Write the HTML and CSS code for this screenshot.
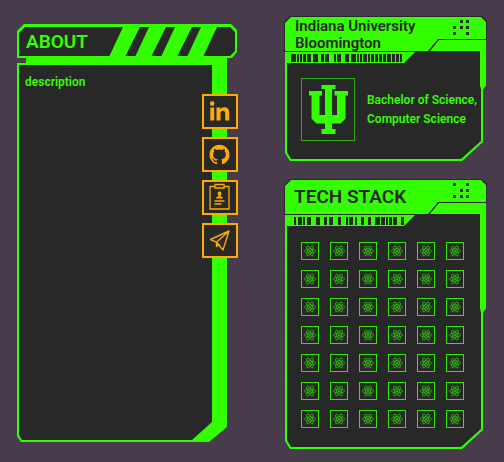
FILE: index.html
```html
<!DOCTYPE html>
<html lang="en">
<head>
<meta charset="utf-8">
<meta name="viewport" content="width=device-width, initial-scale=1">
<title>About</title>
<link rel="stylesheet" href="styles.css">
</head>
<body>
<svg class="sprite" aria-hidden="true">
  <symbol id="react" viewBox="0 0 24 24">
    <g fill="none" stroke="currentColor" stroke-width="1.5">
      <ellipse cx="12" cy="12" rx="11" ry="4.3"/>
      <ellipse cx="12" cy="12" rx="11" ry="4.3" transform="rotate(60 12 12)"/>
      <ellipse cx="12" cy="12" rx="11" ry="4.3" transform="rotate(120 12 12)"/>
    </g>
    <circle cx="12" cy="12" r="2.2" fill="currentColor"/>
  </symbol>
</svg>
<main class="page">
  <section class="about">
    <header class="about-head">
      <h1 class="title">ABOUT</h1>
      <svg class="stripes" viewBox="0 0 108 30" aria-hidden="true">
        <path d="M14 0h17L16 30H0zM40 0h17L42 30H26zM66 0h17L68 30H52zM92 0h16L94 30H78z"/>
      </svg>
    </header>
    <div class="about-body">
      <p class="description">description</p>
      <nav class="social" aria-label="Social links">
        <a class="social-link" href="#linkedin" aria-label="LinkedIn">
          <svg viewBox="0 0 35 35"><path fill="currentColor" d="M8.300 13.500h3.900v13H8.300zM10.200 7.300a2.300 2.300 0 1 1 0 4.600 2.300 2.300 0 0 1 0-4.600zM14.500 13.500h3.800v1.800c.700-1.200 2.100-2.100 4-2.100 3.900 0 4.900 2.400 4.900 6v7.300h-4v-6.600c0-1.700-.200-3.200-2.200-3.200-2 0-2.500 1.500-2.500 3.200v6.600h-4z"/></svg>
        </a>
        <a class="social-link" href="#github" aria-label="GitHub">
          <svg viewBox="0 0 35 35"><path transform="translate(7.500 7.500) scale(.83)" fill="currentColor" d="M12 .3a12 12 0 0 0-3.800 23.400c.6.100.8-.3.800-.6v-2c-3.300.7-4-1.600-4-1.600-.6-1.400-1.400-1.800-1.400-1.800-1-.7.100-.7.100-.7 1.200 0 1.900 1.200 1.900 1.200 1 1.800 2.800 1.300 3.500 1 0-.8.400-1.300.7-1.600-2.700-.3-5.500-1.300-5.500-6 0-1.200.5-2.300 1.300-3.100-.2-.4-.6-1.600 0-3.200 0 0 1-.3 3.400 1.200a11.500 11.500 0 0 1 6 0c2.300-1.500 3.300-1.200 3.300-1.200.6 1.600.2 2.800 0 3.200.9.800 1.300 1.900 1.300 3.200 0 4.600-2.800 5.600-5.500 5.900.5.400.9 1 .9 2.200v3.300c0 .3.100.7.800.6A12 12 0 0 0 12 .3"/></svg>
        </a>
        <a class="social-link" href="#resume" aria-label="Resume">
          <svg viewBox="0 0 35 35"><g fill="none" stroke="currentColor" stroke-width="1.300"><path d="M13 6.500H8v22.500h19V6.500h-5M13 4.500h9v3.500h-9zM12.500 21h10M12.500 24h7"/></g><path fill="currentColor" d="M17.500 11.500a1.900 1.900 0 0 1 1.200 3.400v1.600l2 .6v1.400h-6.400v-1.400l2-.6v-1.600a1.900 1.900 0 0 1 1.200-3.400z"/></svg>
        </a>
        <a class="social-link" href="#contact" aria-label="Contact">
          <svg viewBox="0 0 35 35"><path fill="none" stroke="currentColor" stroke-width="1.400" stroke-linejoin="round" d="M27 8 8.500 16.500l6 2.800L21 27zM27 8 14.500 19.300v4.200l3.200-2.200"/></svg>
        </a>
      </nav>
    </div>
  </section>
  <div class="cards">
    <section class="card">
      <header class="card-head">
        <h2 class="subtitle">Indiana University Bloomington</h2>
        <svg class="dots" viewBox="0 0 16 15" aria-hidden="true"><path d="M7 0h3v3H7zM13 0h3v3h-3zM0 6h3v3H0zM7 6h3v3H7zM13 6h3v3h-3zM0 12h3v3H0zM13 12h3v3h-3z"/></svg>
      </header>
      <div class="strip">
        <svg class="barcode" viewBox="0 0 113 8" aria-hidden="true"><path d="M0 0h5v8H0zM6 0h2v8H6zM9 0h2v8H9zM12 0h3v8h-3zM16 0h4v8h-4zM22 0h5v8h-5zM30 0h3v8h-3zM34 0h4v8h-4zM43 0h2v8h-2zM46 0h4v8h-4zM54 0h4v8h-4zM60 0h5v8h-5zM66 0h2v8h-2zM69 0h2v8h-2zM72 0h4v8h-4zM77 0h2v8h-2zM80 0h3v8h-3zM84 0h3v8h-3zM88 0h3v8h-3zM92 0h3v8h-3zM96 0h4v8h-4zM101 0h3v8h-3zM105 0h3v8h-3zM109 0h2v8h-2z"/></svg>
      </div>
      <div class="degree">
        <div class="crest">
          <svg viewBox="0 0 54 63" role="img" aria-label="Indiana University"><path d="M20.500 7h14v4H31v26h5V17.500h-2.500V13H47v4.500h-2.500v23l-5 5H31V51h3.500v5h-14v-5H24v-5.500h-8.500l-5-5v-23H8V13h13v4.500h-2.500V37H24V11h-3.500z"/></svg>
        </div>
        <p class="degree-text">Bachelor of Science,<br>Computer Science</p>
      </div>
    </section>
    <section class="card card-tech">
      <header class="card-head">
        <h2 class="title">TECH STACK</h2>
        <svg class="dots" viewBox="0 0 16 15" aria-hidden="true"><path d="M0 0h3v3H0zM13 0h3v3h-3zM7 6h3v3H7zM13 6h3v3h-3zM0 12h3v3H0zM7 12h3v3H7zM13 12h3v3h-3z"/></svg>
      </header>
      <div class="strip">
        <svg class="barcode" viewBox="0 0 113 8" aria-hidden="true"><path d="M3 0h2v8H3zM7 0h4v8H7zM12 0h2v8h-2zM16 0h4v8h-4zM25 0h4v8h-4zM33 0h3v8h-3zM38 0h4v8h-4zM47 0h3v8h-3zM55 0h2v8h-2zM58 0h4v8h-4zM64 0h2v8h-2zM70 0h3v8h-3zM77 0h3v8h-3zM84 0h5v8h-5zM90 0h4v8h-4zM95 0h2v8h-2zM98 0h3v8h-3zM102 0h4v8h-4zM110 0h3v8h-3z"/></svg>
      </div>
      <ul class="stack" id="stack"></ul>
    </section>
  </div>
</main>
<script src="script.js"></script>
</body>
</html>
```
FILE: script.js
```js
const stack = document.getElementById("stack");
const technologies = Array(42).fill("React");

stack.innerHTML = technologies
  .map((name) => `<li class="tech"><svg role="img" aria-label="${name}"><use href="#react"/></svg></li>`)
  .join("");
```
FILE: styles.css
```css
:root {
  --green: #33ff00;
  --dark: #282828;
  --orange: #ffaa00;
}

* { box-sizing: border-box; }

body {
  margin: 0;
  background: #483b4b;
  color: var(--green);
  font-family: Roboto, "Liberation Sans", sans-serif;
  font-weight: 600;
}

h1, h2, p, ul { margin: 0; padding: 0; }

svg { display: block; }

.sprite { position: absolute; width: 0; height: 0; }

.page {
  display: grid;
  grid-template-columns: 220fr 203fr;
  gap: 47px;
  min-height: 100vh;
  padding: 16px 17px 13px;
}

.title { font-size: 19px; line-height: 22px; font-weight: 600; }

/* About panel */
.about {
  display: flex;
  flex-direction: column;
  padding: 8px 0 7px;
}

.about-head {
  position: relative;
  z-index: 0;
  display: flex;
  align-items: center;
  justify-content: space-between;
  height: 34px;
  padding: 4px 20px 2px 9px;
  background: var(--green);
  clip-path: polygon(7px 0, calc(100% - 6px) 0, 100% 6px, 100% calc(100% - 6px), calc(100% - 5px) 100%, 0 100%, 0 7px);
}

.about-head::before {
  content: "";
  position: absolute;
  z-index: -1;
  inset: 3px 2px 2px;
  background: var(--dark);
  clip-path: polygon(6px 0, calc(100% - 5px) 0, 100% 5px, 100% calc(100% - 5px), calc(100% - 5px) 100%, 0 100%, 0 6px);
}

.stripes { width: 108px; height: 30px; fill: var(--green); }

.about-body {
  position: relative;
  z-index: 0;
  flex: 1;
  padding: 16px 33px 16px 8px;
}

.about-body::before,
.about-body::after,
.card::before,
.card::after {
  content: "";
  position: absolute;
  z-index: -2;
  inset: 0;
  background: var(--green);
}

.about-body::after,
.card::after { z-index: -1; background: var(--dark); }

.about-body::before {
  clip-path: polygon(9px 0, calc(100% - 10px) 0, calc(100% - 10px) calc(100% - 15px), calc(100% - 28px) 100%, 4px 100%, 0 calc(100% - 6px), 0 5px, 9px 5px);
}

.about-body::after {
  clip-path: polygon(2px 7px, calc(100% - 25px) 7px, calc(100% - 25px) calc(100% - 20px), calc(100% - 45px) calc(100% - 2px), 5px calc(100% - 2px), 2px calc(100% - 7px));
}

.description { font-size: 12px; line-height: 16px; }

.social {
  position: absolute;
  top: 36px;
  right: 0;
  display: grid;
  gap: 8px;
  margin-right: -1px;
}

.social-link {
  width: 36px;
  height: 35px;
  border: 2px solid var(--orange);
  background: var(--dark);
  color: var(--orange);
}

.social-link svg { width: 35px; height: 35px; margin: -2px; }

/* Cards */
.cards { display: grid; grid-template-rows: auto 1fr; gap: 18px; }

.card { position: relative; z-index: 0; }

.card::before {
  clip-path: polygon(1px 10px, calc(100% - 1px) 10px, calc(100% - 1px) 48%, calc(100% - 4px) calc(48% + 4px), calc(100% - 4px) calc(100% - 19px), calc(100% - 25px) 100%, 6px 100%, 1px calc(100% - 8px));
}

.card::after {
  clip-path: polygon(3px 47px, 120px 47px, 132px 35px, calc(100% - 7px) 35px, calc(100% - 7px) 48%, calc(100% - 6px) calc(48% + 4px), calc(100% - 6px) calc(100% - 20px), calc(100% - 26px) calc(100% - 2px), 7px calc(100% - 2px), 3px calc(100% - 9px));
}

.card-head {
  position: relative;
  z-index: 0;
  display: flex;
  align-items: flex-start;
  justify-content: space-between;
  height: 36px;
  padding: 0 18px 0 10px;
  background: var(--dark);
  color: var(--dark);
  clip-path: polygon(6px 0, calc(100% - 5px) 0, 100% 5px, 100% 24px, calc(100% - 48px) 24px, calc(100% - 58px) 100%, 0 100%, 0 6px);
}

.card-head::before {
  content: "";
  position: absolute;
  z-index: -1;
  inset: 1px;
  background: var(--green);
  clip-path: polygon(6px 0, calc(100% - 5px) 0, 100% 5px, 100% 22px, calc(100% - 48px) 22px, calc(100% - 58px) 100%, 0 100%, 0 6px);
}

.card-head .title { align-self: center; }

.subtitle { max-width: 130px; padding: 2px 0 0 1px; font-size: 15px; line-height: 17px; font-weight: 600; }

.dots { width: 16px; height: 15px; margin-top: 4px; fill: var(--dark); }

.strip { height: 11px; padding: 2px 7px; }

.barcode { width: 113px; height: 8px; fill: var(--dark); }

.degree {
  display: flex;
  align-items: center;
  gap: 12px;
  padding: 15px 0 20px 17px;
}

.crest { border: 1px solid #2fae12; width: 54px; height: 63px; }

.crest svg { width: 54px; height: 63px; margin: -1px; fill: var(--green); }

.degree-text { font-size: 12px; line-height: 19px; white-space: nowrap; }

.stack {
  display: grid;
  grid-template-columns: repeat(6, 18px);
  justify-content: space-between;
  row-gap: 10px;
  padding: 16px 23px 20px 17px;
  list-style: none;
}

.tech {
  display: grid;
  place-items: center;
  height: 18px;
  border: 1px solid #31e804;
}

.tech svg { width: 12px; height: 12px; color: #2fc40d; }
```
